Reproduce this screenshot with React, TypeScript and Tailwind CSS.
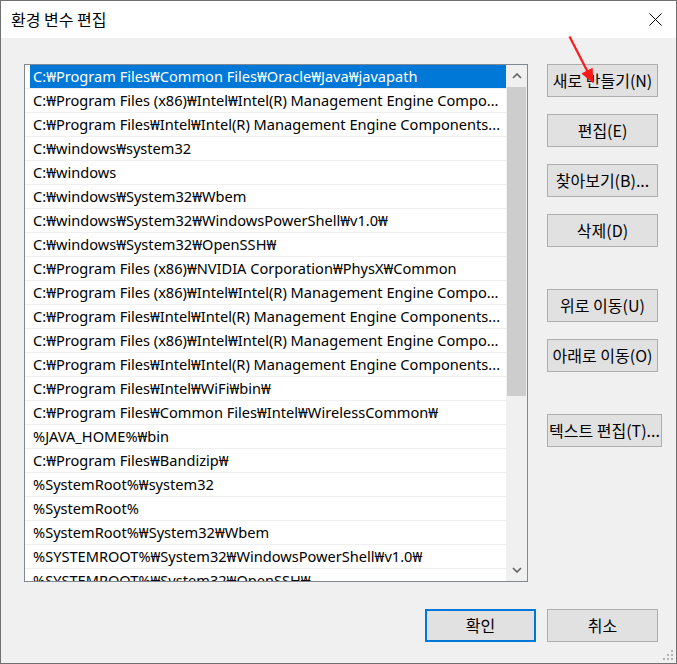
import React from "react";

const rows: string[] = [
  "C:₩Program Files₩Common Files₩Oracle₩Java₩javapath",
  "C:₩Program Files (x86)₩Intel₩Intel(R) Management Engine Compo...",
  "C:₩Program Files₩Intel₩Intel(R) Management Engine Components...",
  "C:₩windows₩system32",
  "C:₩windows",
  "C:₩windows₩System32₩Wbem",
  "C:₩windows₩System32₩WindowsPowerShell₩v1.0₩",
  "C:₩windows₩System32₩OpenSSH₩",
  "C:₩Program Files (x86)₩NVIDIA Corporation₩PhysX₩Common",
  "C:₩Program Files (x86)₩Intel₩Intel(R) Management Engine Compo...",
  "C:₩Program Files₩Intel₩Intel(R) Management Engine Components...",
  "C:₩Program Files (x86)₩Intel₩Intel(R) Management Engine Compo...",
  "C:₩Program Files₩Intel₩Intel(R) Management Engine Components...",
  "C:₩Program Files₩Intel₩WiFi₩bin₩",
  "C:₩Program Files₩Common Files₩Intel₩WirelessCommon₩",
  "%JAVA_HOME%₩bin",
  "C:₩Program Files₩Bandizip₩",
  "%SystemRoot%₩system32",
  "%SystemRoot%",
  "%SystemRoot%₩System32₩Wbem",
  "%SYSTEMROOT%₩System32₩WindowsPowerShell₩v1.0₩",
  "%SYSTEMROOT%₩System32₩OpenSSH₩",
];

const font = { fontFamily: '"Noto Sans", "Noto Sans CJK KR", sans-serif' };
const kfont = { fontFamily: '"Noto Sans CJK KR", "Noto Sans", sans-serif' };

function Btn({ label, wide, primary }: { label: string; wide?: boolean; primary?: boolean }) {
  return (
    <div
      className={
        "h-[33px] shrink-0 flex items-center justify-center pb-[2px] bg-[#e1e1e1] text-[16px] leading-none text-black whitespace-nowrap " +
        (wide ? "w-[115px] " : "w-[111px] ") +
        (primary ? "border-2 border-[#0078d7]" : "border border-[#adadad]")
      }
      style={kfont}
    >
      {label}
    </div>
  );
}

export default function App() {
  return (
    <div className="relative w-[677px] h-[664px] border border-[#707070] bg-[#f0f0f0] flex flex-col overflow-hidden">
      {/* Title bar */}
      <div className="h-[37px] bg-white flex items-center justify-between pl-[10px] pr-[14px]">
        <span className="text-[16px] leading-none pb-[1px] text-black" style={kfont}>
          환경 변수 편집
        </span>
        <svg width="13" height="13" viewBox="0 0 13 13">
          <path d="M0.5 0.5 L12.5 12.5 M12.5 0.5 L0.5 12.5" stroke="#000" strokeWidth="1" fill="none" />
        </svg>
      </div>

      {/* Body */}
      <div className="flex-1 flex flex-col pl-[23px] pr-[18px] pt-[26px]">
        <div className="flex">
          {/* List */}
          <div className="w-[504px] shrink-0 h-[518px] border border-[#828790] bg-white flex overflow-hidden">
            <div className="w-[481px] shrink-0 flex flex-col overflow-hidden">
              {rows.map((r, i) => (
                <div key={i} className="h-[24px] shrink-0 border-b border-[#f0f0f0] flex">
                  <div
                    className={
                      "ml-[5px] flex-1 flex items-center pl-[3px] whitespace-nowrap overflow-hidden text-[14.6px] " +
                      (i === 0 ? "bg-[#0078d7] text-white" : "text-black")
                    }
                    style={font}
                  >
                    {r}
                  </div>
                </div>
              ))}
            </div>
            {/* Scrollbar */}
            <div className="w-[21px] shrink-0 bg-[#f0f0f0] flex flex-col">
              <div className="h-[22px] flex items-center justify-center">
                <svg width="10" height="6" viewBox="0 0 10 6">
                  <polyline points="1,5 5,1 9,5" fill="none" stroke="#606060" strokeWidth="1.6" />
                </svg>
              </div>
              <div className="mx-[1px] h-[309px] bg-[#cdcdcd]" />
              <div className="flex-1" />
              <div className="h-[22px] flex items-center justify-center">
                <svg width="10" height="6" viewBox="0 0 10 6">
                  <polyline points="1,1 5,5 9,1" fill="none" stroke="#606060" strokeWidth="1.6" />
                </svg>
              </div>
            </div>
          </div>

          {/* Side buttons */}
          <div className="ml-[19px] shrink-0 flex flex-col">
            <Btn label="새로 만들기(N)" />
            <div className="h-[17px]" />
            <Btn label="편집(E)" />
            <div className="h-[17px]" />
            <Btn label="찾아보기(B)..." />
            <div className="h-[17px]" />
            <Btn label="삭제(D)" />
            <div className="h-[42px]" />
            <Btn label="위로 이동(U)" />
            <div className="h-[17px]" />
            <Btn label="아래로 이동(O)" />
            <div className="h-[42px]" />
            <Btn label="텍스트 편집(T)..." wide />
          </div>
        </div>

        {/* Bottom buttons */}
        <div className="flex justify-end gap-[11px] mt-[27px]">
          <Btn label="확인" primary />
          <Btn label="취소" />
        </div>
      </div>

      {/* Resize grip */}
      <svg className="absolute right-[2px] bottom-[2px]" width="12" height="12" viewBox="0 0 12 12">
        <rect x="9" y="1" width="2" height="2" fill="#b4b4b4" />
        <rect x="5" y="5" width="2" height="2" fill="#b4b4b4" />
        <rect x="9" y="5" width="2" height="2" fill="#b4b4b4" />
        <rect x="1" y="9" width="2" height="2" fill="#b4b4b4" />
        <rect x="5" y="9" width="2" height="2" fill="#b4b4b4" />
        <rect x="9" y="9" width="2" height="2" fill="#b4b4b4" />
      </svg>

      {/* Red annotation arrow */}
      <svg className="absolute left-[-1px] top-[-1px] pointer-events-none" width="677" height="664" viewBox="0 0 677 664">
        <line x1="569.5" y1="36.5" x2="588" y2="72.5" stroke="#ff1a1a" strokeWidth="2.2" />
        <polygon points="593.5,83.5 592.6,67.8 581.4,73.6" fill="#ff1a1a" />
      </svg>
    </div>
  );
}
